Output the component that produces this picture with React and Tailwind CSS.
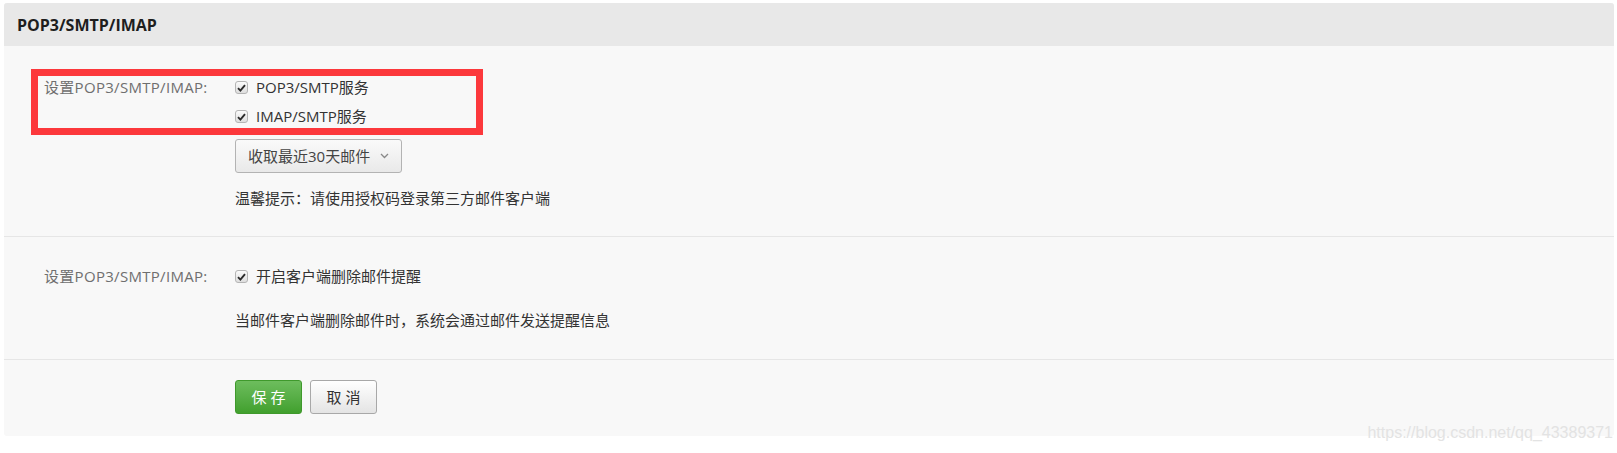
import React from 'react';

const font = { fontFamily: '"Open Sans", "Noto Sans CJK SC", sans-serif' };

function Check({ children }) {
  return (
    <label className="flex items-center h-[29px] text-[15px] text-[#333]">
      <span className="w-[13px] h-[13px] rounded-[3px] border border-[#b5b5b5] bg-gradient-to-b from-[#fbfbfb] to-[#dedede] flex items-center justify-center mr-[8px]">
        <svg width="9" height="8" viewBox="0 0 9 8">
          <path d="M1 4.2 L3.4 6.6 L8 1.2" fill="none" stroke="#2b2b2b" strokeWidth="1.9" />
        </svg>
      </span>
      {children}
    </label>
  );
}

function Row({ label, children }) {
  return (
    <div className="flex">
      <div className="w-[191px] shrink-0 h-[29px] flex items-center text-[15px] tracking-[0.3px] text-[#6f6f6f]">{label}</div>
      <div className="flex flex-col">{children}</div>
    </div>
  );
}

export default function App() {
  return (
    <div className="relative min-h-screen bg-white pt-[3px] pl-[4px] pr-[3px]" style={font}>
      <div className="rounded-[3px] overflow-hidden bg-[#f8f8f8]">
        {/* header */}
        <div className="h-[43px] bg-[#e8e8e8] flex items-center px-[13px] text-[16px] font-bold text-[#1e1e1e]">
          POP3/SMTP/IMAP
        </div>

        {/* section 1 */}
        <div className="pl-[40px] pt-[27px] pb-[28px] border-b border-[#e6e6e6]">
          <Row label="设置POP3/SMTP/IMAP:">
            <Check>POP3/SMTP服务</Check>
            <Check>IMAP/SMTP服务</Check>
            <button className="mt-[8px] w-[167px] h-[34px] rounded-[3px] border border-[#b3b3b3] bg-gradient-to-b from-[#fafafa] to-[#e9e9e9] flex items-center pl-[12px] text-[15px] text-[#444]">
              收取最近30天邮件
              <svg className="ml-[10px]" width="9" height="6" viewBox="0 0 9 6">
                <path d="M1 1 L4.5 4.5 L8 1" fill="none" stroke="#888" strokeWidth="1.3" />
              </svg>
            </button>
            <div className="mt-[15px] h-[20px] flex items-center text-[15px] text-[#333]">
              温馨提示：请使用授权码登录第三方邮件客户端
            </div>
          </Row>
        </div>

        {/* section 2 */}
        <div className="pl-[40px] pt-[25px] pb-[29px] border-b border-[#e6e6e6]">
          <Row label="设置POP3/SMTP/IMAP:">
            <Check>开启客户端删除邮件提醒</Check>
            <div className="mt-[19px] h-[20px] flex items-center text-[15px] text-[#333]">
              当邮件客户端删除邮件时，系统会通过邮件发送提醒信息
            </div>
          </Row>
        </div>

        {/* actions */}
        <div className="pl-[231px] pt-[20px] pb-[22px] flex gap-[8px]">
          <button className="w-[67px] h-[34px] rounded-[3px] border border-[#3f992c] bg-gradient-to-b from-[#6dbd5d] to-[#41a02d] text-white text-[15px] tracking-[4px] pl-[4px]">
            保存
          </button>
          <button className="w-[67px] h-[34px] rounded-[3px] border border-[#a8a8a8] bg-gradient-to-b from-[#ffffff] to-[#e4e4e4] text-[#333] text-[15px] tracking-[4px] pl-[4px]">
            取消
          </button>
        </div>
      </div>

      {/* annotation box */}
      <div className="absolute left-[31px] top-[69px] w-[452px] h-[66px] border-[7px] border-[#fc383c] pointer-events-none" />

      {/* watermark */}
      <div
        className="absolute right-[4px] top-[421px] text-[16px] text-[#e3e3e3] pointer-events-none"
        style={{ fontFamily: '"Liberation Sans", Arial, sans-serif' }}
      >
        https://blog.csdn.net/qq_43389371
      </div>
    </div>
  );
}
